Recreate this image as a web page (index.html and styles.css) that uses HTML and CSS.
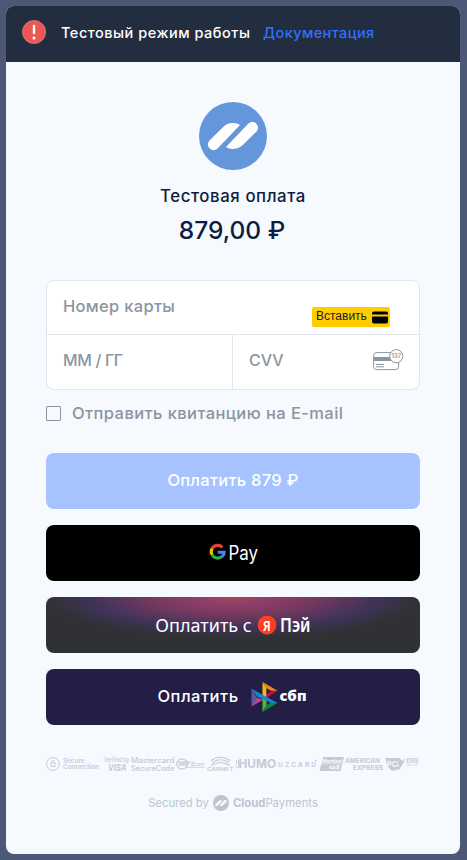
FILE: index.html
```html
<!DOCTYPE html>
<html lang="ru">
<head>
<meta charset="utf-8">
<title>Тестовая оплата</title>
<link rel="stylesheet" href="styles.css">
</head>
<body>
<main class="widget">
  <header class="notice">
    <svg class="notice-icon" viewBox="0 0 24 24"><circle cx="12" cy="12" r="11.600" fill="#eb5757" stroke="#ee8080" stroke-width=".7"/><path d="M12 6v7" stroke="#fff" stroke-width="2.400" stroke-linecap="round"/><circle cx="12" cy="18" r="1.500" fill="#fff"/></svg>
    <span class="notice-text">Тестовый режим работы</span>
    <a class="notice-link">Документация</a>
  </header>
  <div class="content">
    <svg class="logo" viewBox="0 0 68 68">
      <circle cx="34" cy="34" r="34" fill="#6496dc"/>
      <g fill="#fff"><path id="stroke" d="M10.500 38.400 25 24.300Q29 20.800 34 21Q38.500 20.900 41 23.100L18.800 46.300Q14.500 50 10.800 46.500Q7.300 42.500 10.500 38.400Z"/><use href="#stroke" transform="rotate(180 34 34)"/></g>
    </svg>
    <h1 class="title">Тестовая оплата</h1>
    <p class="amount">879,00 ₽</p>

    <div class="card-form">
      <div class="field field-number"><span class="ph-number">Номер карты</span>
        <button class="paste"><span>Вставить</span><svg viewBox="0 0 16 13"><path d="M2 .5h12q2 0 2 2V3.500H0V2.500Q0 .5 2 .5ZM0 5.500h16V10.500q0 2-2 2H2q-2 0-2-2Z"/></svg></button>
      </div>
      <div class="field-row">
        <div class="field"><span class="ph-date">ММ / ГГ</span></div>
        <div class="field field-cvv"><span>CVV</span>
          <svg class="cvv-icon" viewBox="0 0 31 22"><rect x=".6" y="3.600" width="25" height="17" rx="3" fill="#fff" stroke="#8c949f"/><path d="M.6 8h25v4H.6Z" fill="#8c949f"/><path d="M3 15.500h8M3 17.800h8" stroke="#8c949f"/><circle cx="23.300" cy="7.200" r="6.600" fill="#fff" stroke="#8c949f"/><text x="18.600" y="9.200" font-size="5.500" textLength="9.400" lengthAdjust="spacingAndGlyphs" font-weight="600" fill="#8c949f">137</text></svg>
        </div>
      </div>
    </div>

    <label class="receipt"><span class="box"></span><span class="receipt-text">Отправить квитанцию на E-mail</span></label>

    <div class="buttons">
      <button class="btn btn-pay"><span>Оплатить 879 ₽</span></button>
      <button class="btn btn-google">
        <svg class="gpay" viewBox="0 0 50 28">
          <g fill="none" stroke-width="3.100"><path d="M13.300 8.300A6.500 6.500 0 0 0 3.100 9.500" stroke="#ea4335"/><path d="M3.100 9.500A6.500 6.500 0 0 0 3.100 15.800" stroke="#fbbc04"/><path d="M3.100 15.800A6.500 6.500 0 0 0 13.200 17.400" stroke="#34a853"/><path d="M13.200 17.400Q15.300 15.300 15.200 13.200H8.800" stroke="#4285f4"/></g>
          <text x="19.500" y="20.500" font-size="19.500" textLength="29.500" lengthAdjust="spacingAndGlyphs" fill="#fff">Pay</text>
        </svg>
      </button>
      <button class="btn btn-yandex"><span>Оплатить с</span>
        <svg class="yapay" viewBox="0 0 54 28"><circle cx="10" cy="14" r="9.400" fill="#fc3f1d"/><text x="5.800" y="19.500" font-size="15" textLength="8" lengthAdjust="spacingAndGlyphs">Я</text><text x="23" y="21" font-size="19" textLength="30.500" lengthAdjust="spacingAndGlyphs">Пэй</text></svg>
      </button>
      <button class="btn btn-sbp"><span>Оплатить</span>
        <svg class="sbp" viewBox="0 0 56 32"><path d="M.5 7.500 6 17 .5 25.500Z" fill="#5b57a2"/><path d="M.5 25.500 6 16.500 12 19Z" fill="#b8489b"/><path d="M15 13.500 20 10.500 26.500 9.800 16 16.500Z" fill="#d90751"/><path d="M11.500 1 26.500 9.800H20L15 7Z" fill="#f08719"/><path d="M11.500 1 15.300 7.500V17L11.500 19Z" fill="#fab718"/><path d="M11.500 16h4V24L11.500 31Z" fill="#63b22f"/><path d="M11.500 31 15.300 24 20 21.500 26.500 22Z" fill="#0c8541"/><path d="M.5 7.500 26.500 22H20L6 15.500Z" fill="#1487c9"/><text x="28.500" y="19.500" font-size="13.500" textLength="27" lengthAdjust="spacingAndGlyphs">сбп</text></svg>
      </button>
    </div>

    <svg class="badges" viewBox="0 0 374 20" fill="#c3cbd7">
      <circle cx="7" cy="10" r="6.400" fill="none" stroke="#c3cbd7"/><path d="M5 9h4v3.500H5ZM5.800 9V7.700a1.200 1.200 0 0 1 2.400 0V9" fill="none" stroke="#c3cbd7" stroke-width=".9"/>
      <text x="17" y="9" font-size="5.500" textLength="21.500" lengthAdjust="spacingAndGlyphs" font-weight="600">Secure</text><text x="17" y="15" font-size="5.500" textLength="36" lengthAdjust="spacingAndGlyphs" font-weight="600">Connection</text>
      <text x="58" y="7.500" font-size="6.200" font-weight="500" textLength="25" lengthAdjust="spacingAndGlyphs">Verified by</text><text x="62" y="17" font-size="9.500" font-weight="700" font-style="italic" textLength="18.500" lengthAdjust="spacingAndGlyphs">VISA</text>
      <text x="85" y="9" font-size="7.300" font-weight="500" textLength="43.500" lengthAdjust="spacingAndGlyphs">Mastercard</text><text x="85" y="17" font-size="7.300" font-weight="500" textLength="43.500" lengthAdjust="spacingAndGlyphs">SecureCode</text>
      <circle cx="136" cy="10" r="5.200" fill="none" stroke="#c3cbd7" stroke-width="1.200"/><text x="132.500" y="12" font-size="6" font-weight="700" textLength="11" lengthAdjust="spacingAndGlyphs">МИР</text><text x="145" y="11.600" font-size="3.800" font-weight="700" textLength="13.500" lengthAdjust="spacingAndGlyphs">ACCEPT</text><path d="M139 13.300h20M144 8.300h5" stroke="#c3cbd7" stroke-width=".8"/>
      <g fill="none" stroke="#c3cbd7" stroke-width="1.200"><path d="M165 6.500Q174 0 184 6.500M166 8.500Q175 3 183 8.500M165 11.500Q170 8.500 174 8.500T184 11.500"/></g><text x="161" y="17" font-size="4.700" font-weight="600" textLength="26.500" lengthAdjust="spacingAndGlyphs">CARNET</text>
      <path d="M190.500 6v4M189.500 12q2 3 3 1V6" fill="none" stroke="#c3cbd7"/><text x="192.500" y="14" font-size="11.500" font-weight="700" textLength="37.500" lengthAdjust="spacingAndGlyphs">HUMO</text>
      <text x="232" y="12.500" font-size="6.500" font-weight="600" textLength="38">UZCARD</text><circle cx="270" cy="6.500" r="1"/>
      <path d="M277 3h21l-3.500 14H273.500Z"/><path d="M275 10h21M285 15h9" stroke="#f6f9fe" stroke-width=".5"/><text x="276" y="8.800" font-size="5.200" font-weight="700" fill="#f6f9fe" textLength="20" lengthAdjust="spacingAndGlyphs">Member</text><text x="283" y="14.600" font-size="4.500" font-weight="700" fill="#f6f9fe" textLength="11" lengthAdjust="spacingAndGlyphs">of</text>
      <text x="299" y="8.700" font-size="5.800" font-weight="700" textLength="35" lengthAdjust="spacingAndGlyphs">AMERICAN</text><text x="307" y="16.300" font-size="5.800" font-weight="700" textLength="30" lengthAdjust="spacingAndGlyphs">EXPRESS</text>
      <path d="M339 4h14l4 3-3 8-8 2-4-4Z"/><text x="341" y="13" font-size="8" font-weight="700" fill="#f6f9fe" textLength="12" lengthAdjust="spacingAndGlyphs">PCI</text><path d="m352 8 3 4 4-7" fill="none" stroke="#c3cbd7" stroke-width="1.200"/><text x="360.500" y="9" font-size="5.500" font-weight="700" textLength="12" lengthAdjust="spacingAndGlyphs">DSS</text><text x="360.500" y="12" font-size="2.300" textLength="11" lengthAdjust="spacingAndGlyphs">COMPLIANT</text>
    </svg>

    <footer class="secured">
      <span>Secured by</span>
      <svg class="mini" viewBox="0 0 68 68"><circle cx="34" cy="34" r="34" fill="#bcc5d1"/><g fill="#f6f9fe"><use href="#stroke"/><use href="#stroke" transform="rotate(180 34 34)"/></g></svg>
      <span><b>Cloud</b>Payments</span>
    </footer>
  </div>
</main>
</body>
</html>
```
FILE: styles.css
```css
* { box-sizing: border-box; }
body {
  margin: 0;
  padding: 6px 7px 6px 6px;
  height: 860px;
  overflow: hidden;
  background: #4b5876;
  font-family: Inter, "Noto Sans", sans-serif;
  color: #0c1c42;
}
button { border: 0; padding: 0; font: inherit; }
svg { display: block; flex: none; overflow: visible; }
span { white-space: nowrap; }
.widget {
  height: 848px;
  border-radius: 8px;
  overflow: hidden;
  background: #f6f9fe;
}
.notice {
  height: 56px;
  padding: 0 16px;
  display: flex;
  align-items: center;
  background: #232d40;
  color: #fff;
  font-size: 14.5px;
  font-weight: 500;
  letter-spacing: .52px;
}
.notice-icon { width: 24px; height: 24px; margin: -4px 15px 0 0; }
.notice-text { width: 202px; margin-top: -3px; }
.notice-link { margin-top: -3px; color: #2e71fc; letter-spacing: .4px; }
.content { padding: 40px 40px 0; }
.logo { width: 68px; height: 68px; margin: 0 auto; }
.title {
  margin: 16px 0 0;
  font-size: 16.8px;
  font-weight: 500;
  line-height: 20px;
  letter-spacing: .58px;
  text-align: center;
}
.amount {
  margin: 8px 0 0;
  font-size: 24.5px;
  font-weight: 500;
  line-height: 32px;
  text-align: center;
  text-indent: -2px;
}
.card-form {
  margin-top: 34px;
  height: 110px;
  border: 1px solid #dfe6ef;
  border-radius: 8px;
  background: #fff;
  color: #8c949f;
}
.field {
  display: flex;
  align-items: center;
  justify-content: space-between;
  padding: 0 16px 4px;
  font-size: 16px;
  font-weight: 500;
}
.field-number { height: 54px; border-bottom: 1px solid #dfe6ef; padding-bottom: 3px; }
.ph-number { font-size: 16.5px; letter-spacing: .3px; }
.ph-date { letter-spacing: -.35px; }
.field-row { display: grid; grid-template-columns: 185px 1fr; height: 54px; }
.field-cvv { border-left: 1px solid #dfe6ef; padding-right: 15px; }
.paste {
  display: flex;
  align-items: center;
  justify-content: space-between;
  width: 78px;
  height: 20px;
  margin: 22px 13px 0 0;
  padding: 0 2px 0 4px;
  border-radius: 2px;
  background: #fc0;
  color: #222;
  font: 12px "Liberation Sans", sans-serif;
}
.paste span { margin-top: -3px; }
.paste svg { width: 16px; height: 13px; }
.cvv-icon { width: 31px; height: 22px; }
.receipt {
  display: flex;
  align-items: center;
  gap: 11px;
  height: 20px;
  margin-top: 13px;
  color: #8c949f;
  font-size: 16.5px;
  font-weight: 500;
}
.receipt-text { letter-spacing: .41px; }
.box { width: 15px; height: 15px; border: 1px solid #8c949f; border-radius: 1px; margin-top: 1px; }
.buttons { display: grid; gap: 16px; margin-top: 30px; }
.btn {
  display: flex;
  align-items: center;
  justify-content: center;
  height: 56px;
  border-radius: 8px;
  color: #fff;
  font-size: 16.5px;
  font-weight: 500;
}
.btn-pay { background: #a6c2ff; letter-spacing: .25px; }
.btn-pay span, .btn-sbp span { margin-top: -2px; }
.btn-google { background: #000; font-weight: 400; }
.gpay { width: 50px; height: 28px; margin-left: 1px; }
.btn-yandex {
  background: radial-gradient(ellipse 187px 41px at 50% 0, #a04848 0, #943f6b 15%, #78395f 42%, #3f3359 76%, #303135 100%) #303135;
  font: 18px "Noto Sans", sans-serif;
}
.yapay { width: 54px; height: 28px; margin-left: 5px; font-family: "Noto Sans", sans-serif; font-weight: 600; fill: #fff; }
.btn-sbp { background: #231e46; padding-right: 2px; }
.btn-sbp span { letter-spacing: .5px; }
.sbp { width: 56px; height: 32px; margin-left: 12px; fill: #fff; font-family: "Open Sans", sans-serif; font-weight: 800; }
.badges { width: 374px; height: 20px; margin-top: 29px; }
.secured {
  display: flex;
  align-items: center;
  justify-content: center;
  margin-top: 21px;
  height: 16px;
  color: #bcc5d1;
  font-size: 11.3px;
}
.mini { width: 16px; height: 16px; margin: 0 4px; }
```
